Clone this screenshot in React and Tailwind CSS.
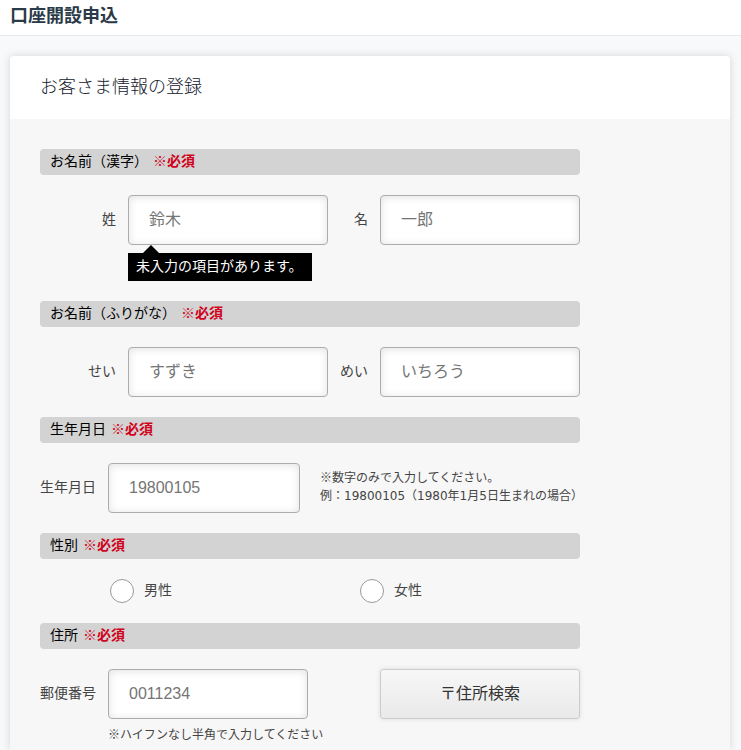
import { useId } from "react";

function SectionBar({ title }) {
  return (
    <h2 className="flex h-[26px] items-center rounded-[4px] bg-[#d3d3d3] px-2.5 pb-0.5 text-sm text-black">
      {title}
      <strong className="ml-[5px] font-bold text-[#d0021b]">※必須</strong>
    </h2>
  );
}

function TextField({ id, placeholder, describedBy }) {
  return (
    <input
      id={id}
      type="text"
      placeholder={placeholder}
      aria-describedby={describedBy}
      className="h-[50px] w-full min-w-0 rounded-[4px] border border-[#acacac] bg-white px-5 text-base text-[#333] shadow-[inset_0_1px_8px_rgba(0,0,0,0.12)] outline-none placeholder:text-[#757575]"
    />
  );
}

function FieldLabel({ htmlFor, children }) {
  return (
    <label
      htmlFor={htmlFor}
      className="flex h-[50px] items-center justify-end pb-0.5 text-sm whitespace-nowrap"
    >
      {children}
    </label>
  );
}

function NameRow({ first, second, error }) {
  const id = useId();
  return (
    <div className="grid grid-cols-[76px_1fr_28px_1fr] gap-x-3">
      <FieldLabel htmlFor={id + "a"}>{first.label}</FieldLabel>
      <div>
        <TextField id={id + "a"} placeholder={first.placeholder} describedBy={error ? id + "e" : undefined} />
        {error && (
          <p
            id={id + "e"}
            role="alert"
            className="relative mt-2 flex h-7 w-[184px] items-center bg-black px-2 pb-0.5 text-sm whitespace-nowrap text-white"
          >
            <span className="absolute bottom-full left-[15px] border-x-8 border-b-8 border-x-transparent border-b-black" />
            {error}
          </p>
        )}
      </div>
      <FieldLabel htmlFor={id + "b"}>{second.label}</FieldLabel>
      <TextField id={id + "b"} placeholder={second.placeholder} />
    </div>
  );
}

function GenderOption({ value, children }) {
  return (
    <label className="flex h-6 items-center gap-2.5 text-sm">
      <input
        type="radio"
        name="gender"
        value={value}
        className="size-6 appearance-none rounded-full border border-[#999] bg-white checked:border-8 checked:border-[#555]"
      />
      <span className="pb-0.5">{children}</span>
    </label>
  );
}

export default function App() {
  return (
    <div className="flex min-h-screen flex-col bg-[#f8f9fb] font-['Liberation_Sans','Noto_Sans_CJK_JP',sans-serif] text-[#444]">
      <header className="flex h-9 items-center border-b border-[#e9e9e9] bg-white px-2.5 pb-1">
        <h1 className="text-lg leading-7 font-bold text-[#2b3a48]">口座開設申込</h1>
      </header>
      <main className="flex grow flex-col px-2.5 pt-5">
        <form className="flex w-full max-w-[720px] grow flex-col rounded-t-[4px] bg-[#f7f7f7] shadow-[0_0_8px_rgba(0,0,0,0.15)]">
          <div className="flex h-[63px] items-center rounded-t-[4px] bg-white px-[30px] pb-0.5">
            <p className="text-lg font-light text-[#14202c]">お客さま情報の登録</p>
          </div>
          <div className="flex w-full max-w-[600px] flex-col gap-5 px-[30px] pt-[30px] pb-1">
            <SectionBar title="お名前（漢字）" />
            <NameRow
              first={{ label: "姓", placeholder: "鈴木" }}
              second={{ label: "名", placeholder: "一郎" }}
              error="未入力の項目があります。"
            />
            <SectionBar title="お名前（ふりがな）" />
            <NameRow
              first={{ label: "せい", placeholder: "すずき" }}
              second={{ label: "めい", placeholder: "いちろう" }}
            />
            <SectionBar title="生年月日" />
            <div className="flex items-center">
              <FieldLabel htmlFor="birth">生年月日</FieldLabel>
              <div className="ml-3 w-[192px] shrink-0">
                <TextField id="birth" placeholder="19800105" describedBy="birth-note" />
              </div>
              <div id="birth-note" className="ml-5 pb-0.5 text-xs leading-[18px] whitespace-nowrap">
                <p>※数字のみで入力してください。</p>
                <p className="font-['DejaVu_Sans','Noto_Sans_CJK_JP',sans-serif]">
                  例：19800105（1980年1月5日生まれの場合）
                </p>
              </div>
            </div>
            <SectionBar title="性別" />
            <div className="grid grid-cols-[250px_1fr] pl-[70px]">
              <GenderOption value="male">男性</GenderOption>
              <GenderOption value="female">女性</GenderOption>
            </div>
            <SectionBar title="住所" />
            <div className="flex">
              <FieldLabel htmlFor="zip">郵便番号</FieldLabel>
              <div className="ml-3 w-[200px]">
                <TextField id="zip" placeholder="0011234" describedBy="zip-note" />
                <p id="zip-note" className="mt-[7px] text-xs leading-[18px] whitespace-nowrap">
                  ※ハイフンなし半角で入力してください
                </p>
              </div>
              <button
                type="button"
                className="ml-auto h-[50px] w-[200px] rounded-[3px] border border-[#ccc] bg-linear-to-b from-[#f7f7f7] to-[#e9e9e9] text-base text-[#333] shadow-[0_0_5px_rgba(0,0,0,0.1)]"
              >
                〒住所検索
              </button>
            </div>
          </div>
        </form>
      </main>
    </div>
  );
}
